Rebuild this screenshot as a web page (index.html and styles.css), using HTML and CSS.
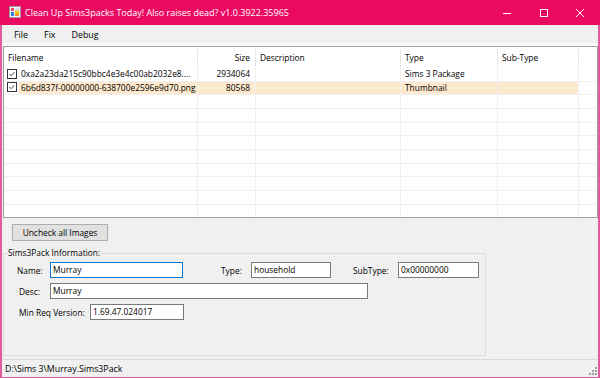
FILE: index.html
```html
<!DOCTYPE html>
<html>
<head>
  <meta charset="utf-8">
  <link rel="stylesheet" href="styles.css">
</head>
<body>
  <div class="titlebar">
    <svg class="app-icon" width="12" height="12" viewBox="0 0 12 12">
      <rect x="0.5" y="0.5" width="11" height="11" fill="#f4f4f4" stroke="#9a9a9a"/>
      <rect x="2" y="2" width="3" height="3" fill="#e84a6a"/>
      <rect x="6" y="2" width="4" height="3" fill="#d8d8d8"/>
      <rect x="6" y="5" width="4" height="3" fill="#f5c400"/>
      <rect x="2" y="6" width="3" height="4" fill="#2d7fd8"/>
      <rect x="6" y="8" width="4" height="2" fill="#f08a24"/>
    </svg>
    <div class="title">Clean Up Sims3packs Today! Also raises dead? v1.0.3922.35965</div>
    <div class="caption-buttons">
      <div class="cap-btn">
        <svg width="10" height="10" viewBox="0 0 10 10"><path d="M1 5.5h8" stroke="#fff" stroke-width="1"/></svg>
      </div>
      <div class="cap-btn">
        <svg width="10" height="10" viewBox="0 0 10 10"><rect x="1.5" y="1.5" width="7" height="7" fill="none" stroke="#fff" stroke-width="1"/></svg>
      </div>
      <div class="cap-btn">
        <svg width="10" height="10" viewBox="0 0 10 10"><path d="M1 1l8 8M9 1l-8 8" stroke="#fff" stroke-width="1"/></svg>
      </div>
    </div>
  </div>

  <div class="frame">
    <div class="menubar">
      <span class="menu-item">File</span>
      <span class="menu-item">Fix</span>
      <span class="menu-item">Debug</span>
    </div>
    <div class="strip"></div>

    <div class="listview">
      <div class="lv-row lv-head">
        <div class="cell">Filename</div>
        <div class="cell right">Size</div>
        <div class="cell">Description</div>
        <div class="cell">Type</div>
        <div class="cell">Sub-Type</div>
        <div class="cell last"></div>
      </div>
      <div class="lv-body">
        <div class="lv-row">
          <div class="cell first">
            <span class="check"><svg width="10" height="10" viewBox="0 0 10 10"><path d="M2 5l2 2.2L8 2.6" fill="none" stroke="#222" stroke-width="1"/></svg></span>
            <span class="name">0xa2a23da215c90bbc4e3e4c00ab2032e8....</span>
          </div>
          <div class="cell right">2934064</div>
          <div class="cell"></div>
          <div class="cell">Sims 3 Package</div>
          <div class="cell"></div>
          <div class="cell last"></div>
        </div>
        <div class="lv-row selected">
          <div class="cell first">
            <span class="check"><svg width="10" height="10" viewBox="0 0 10 10"><path d="M2 5l2 2.2L8 2.6" fill="none" stroke="#222" stroke-width="1"/></svg></span>
            <span class="name">6b6d837f-00000000-638700e2596e9d70.png</span>
          </div>
          <div class="cell right">80568</div>
          <div class="cell"></div>
          <div class="cell">Thumbnail</div>
          <div class="cell"></div>
          <div class="cell last"></div>
        </div>
        <div class="lv-row"><div class="cell"></div><div class="cell"></div><div class="cell"></div><div class="cell"></div><div class="cell"></div><div class="cell last"></div></div>
        <div class="lv-row"><div class="cell"></div><div class="cell"></div><div class="cell"></div><div class="cell"></div><div class="cell"></div><div class="cell last"></div></div>
        <div class="lv-row"><div class="cell"></div><div class="cell"></div><div class="cell"></div><div class="cell"></div><div class="cell"></div><div class="cell last"></div></div>
        <div class="lv-row"><div class="cell"></div><div class="cell"></div><div class="cell"></div><div class="cell"></div><div class="cell"></div><div class="cell last"></div></div>
        <div class="lv-row"><div class="cell"></div><div class="cell"></div><div class="cell"></div><div class="cell"></div><div class="cell"></div><div class="cell last"></div></div>
        <div class="lv-row"><div class="cell"></div><div class="cell"></div><div class="cell"></div><div class="cell"></div><div class="cell"></div><div class="cell last"></div></div>
        <div class="lv-row"><div class="cell"></div><div class="cell"></div><div class="cell"></div><div class="cell"></div><div class="cell"></div><div class="cell last"></div></div>
        <div class="lv-row"><div class="cell"></div><div class="cell"></div><div class="cell"></div><div class="cell"></div><div class="cell"></div><div class="cell last"></div></div>
        <div class="lv-row"><div class="cell"></div><div class="cell"></div><div class="cell"></div><div class="cell"></div><div class="cell"></div><div class="cell last"></div></div>
      </div>
    </div>

    <div class="lower">
      <button class="btn">Uncheck all Images</button>
      <fieldset class="group">
        <legend>Sims3Pack Information:</legend>
        <div class="field-row">
          <label class="lbl lbl-name">Name:</label>
          <div class="textbox focused w-name">Murray</div>
          <label class="lbl lbl-type">Type:</label>
          <div class="textbox w-type">household</div>
          <label class="lbl lbl-sub">SubType:</label>
          <div class="textbox w-sub">0x00000000</div>
        </div>
        <div class="field-row">
          <label class="lbl lbl-desc">Desc:</label>
          <div class="textbox w-desc">Murray</div>
        </div>
        <div class="field-row">
          <label class="lbl lbl-ver">Min Req Version:</label>
          <div class="textbox w-ver">1.69.47.024017</div>
        </div>
      </fieldset>
    </div>

    <div class="statusbar">
      <span>D:\Sims 3\Murray.Sims3Pack</span>
      <svg class="grip" width="9" height="9" viewBox="0 0 9 9">
        <rect x="7" y="1" width="2" height="2" fill="#a0a0a0"/>
        <rect x="4" y="4" width="2" height="2" fill="#a0a0a0"/>
        <rect x="7" y="4" width="2" height="2" fill="#a0a0a0"/>
        <rect x="1" y="7" width="2" height="2" fill="#a0a0a0"/>
        <rect x="4" y="7" width="2" height="2" fill="#a0a0a0"/>
        <rect x="7" y="7" width="2" height="2" fill="#a0a0a0"/>
      </svg>
    </div>
  </div>
</body>
</html>
```

FILE: styles.css
```css
* {
  margin: 0;
  padding: 0;
  box-sizing: border-box;
}

body {
  width: 600px;
  height: 378px;
  overflow: hidden;
  background: #f0f0f0;
  font-family: "Open Sans", "Liberation Sans", sans-serif;
  font-size: 8.4px;
  color: #000;
}

/* title bar */
.titlebar {
  height: 25px;
  background: #eb0a62;
  display: flex;
  align-items: center;
  color: #fff;
}

.app-icon {
  margin-left: 9px;
  margin-top: -1px;
}

.title {
  margin-left: 4px;
  font-size: 9px;
  white-space: nowrap;
}

.caption-buttons {
  margin-left: auto;
  margin-right: 1.5px;
  display: flex;
  height: 100%;
}

.cap-btn {
  width: 36.5px;
  display: flex;
  align-items: center;
  justify-content: center;
}

/* window frame */
.frame {
  height: 353px;
  display: flex;
  flex-direction: column;
  border-left: 2px solid #e25b9c;
  border-right: 2px solid #e25b9c;
  border-bottom: 1px solid #e25b9c;
}

.menubar {
  height: 18px;
  display: flex;
  align-items: center;
  padding-left: 4px;
  font-size: 8.9px;
}

.menu-item {
  padding: 0 8px;
}

.strip {
  height: 3px;
  background: #f8f8f8;
}

/* list view */
.listview {
  height: 172px;
  margin-left: 1px;
  border: 1px solid #a0a0a0;
  background: #fff;
  overflow: hidden;
}

.lv-row {
  display: grid;
  grid-template-columns: 194px 58px 145px 97px 81px 1fr;
  height: 13.67px;
}

.lv-row .cell {
  border-right: 1px solid #f0f0f0;
  border-bottom: 1px solid #f0f0f0;
  padding: 0 4px;
  white-space: nowrap;
  overflow: hidden;
  line-height: 12.5px;
}

.lv-row .cell.right {
  text-align: right;
  padding-right: 5px;
}

.lv-row .cell.last {
  border-right: none;
}

.lv-head {
  height: 21px;
  align-items: center;
}

.lv-head .cell {
  height: 18px;
  margin-top: 1px;
  line-height: 18px;
  border-bottom: none;
  border-right-color: #e5e5e5;
}

.lv-row .cell.first {
  display: flex;
  padding: 0;
}

.check {
  width: 10px;
  height: 10px;
  margin: 0.5px 0 0 3px;
  border: 1px solid #333;
  background: #fff;
  display: flex;
  align-items: center;
  justify-content: center;
  flex-shrink: 0;
}

.check svg {
  width: 8px;
  height: 8px;
}

.name {
  flex: 1;
  margin-left: 2px;
  padding-left: 2px;
  overflow: hidden;
}

.selected .cell:not(.first):not(.last),
.selected .name {
  background: #fde9cd;
}

/* lower panel */
.lower {
  flex: 1;
  display: flex;
  flex-direction: column;
  align-items: flex-start;
}

.btn {
  margin: 6px 0 0 10px;
  width: 96px;
  height: 17px;
  background: #e1e1e1;
  border: 1px solid #adadad;
  font-family: inherit;
  font-size: 8.4px;
  color: #000;
}

.group {
  margin: 6px 0 0 1px;
  width: 483px;
  height: 109px;
  border: 1px solid #dcdcdc;
  padding: 3px 0 0 0;
  min-inline-size: 0;
}

.group legend {
  margin-left: 4px;
  padding: 0;
  line-height: 12px;
  font-size: 8.4px;
}

.field-row {
  display: flex;
  align-items: center;
  height: 16px;
  margin-bottom: 5px;
}

.lbl {
  flex-shrink: 0;
}

.lbl-name { margin-left: 13px; width: 33px; }
.lbl-type { margin-left: 38px; width: 30px; }
.lbl-sub { margin-left: 22px; width: 45px; }
.lbl-desc { margin-left: 15px; width: 31px; }
.lbl-ver { margin-left: 15px; width: 71px; }

.textbox {
  height: 16px;
  background: #fff;
  border: 1px solid #7a7a7a;
  padding-left: 2px;
  line-height: 14px;
  white-space: nowrap;
}

.textbox.focused {
  border-color: #0078d7;
}

.w-name { width: 133px; }
.w-type { width: 80px; }
.w-sub { width: 81px; }
.w-desc { width: 318px; }
.w-ver { width: 94px; }

/* status bar */
.statusbar {
  height: 18px;
  margin-top: 3px;
  border-top: 1px solid #dadada;
  display: flex;
  align-items: center;
  padding-left: 3px;
  font-size: 8.8px;
}

.grip {
  margin-left: auto;
  margin-right: 1px;
  align-self: flex-end;
  margin-bottom: 2px;
}
```
